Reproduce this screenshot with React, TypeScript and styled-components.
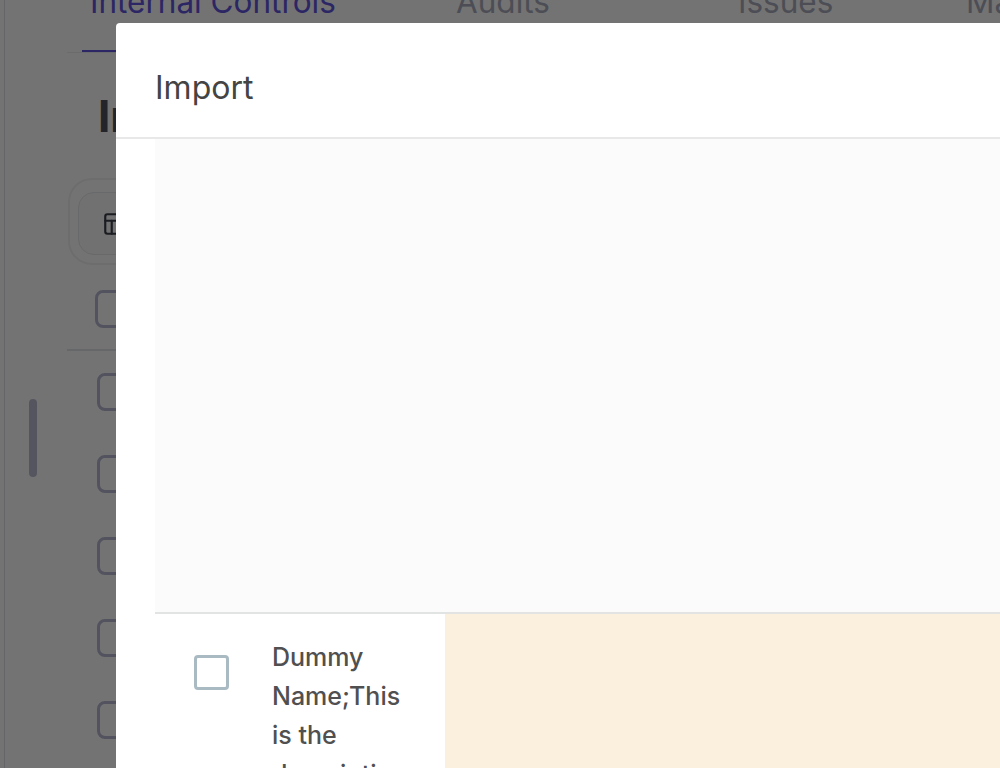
import React from "react";
import styled, { createGlobalStyle } from "styled-components";
import { PanelsTopLeft } from "lucide-react";

const GlobalStyle = createGlobalStyle`
  html, body {
    margin: 0;
    height: 100%;
    overflow: hidden;
    background: #fff;
    font-family: Inter, "Liberation Sans", sans-serif;
  }
  * { box-sizing: border-box; }
`;

const Page = styled.div`
  display: flex;
  height: 768px;
  overflow: hidden;
  padding-left: 4px;
`;

const Rail = styled.div`
  width: 63px;
  flex-shrink: 0;
  border-left: 1px solid #dfe1e6;
  padding: 399px 0 0 24px;
`;

const ScrollThumb = styled.div`
  width: 8px;
  height: 78px;
  border-radius: 4px;
  background: #bbbdd3;
`;

const Main = styled.div`
  flex: 1;
  min-width: 0;
`;

const Tabs = styled.div`
  display: flex;
  height: 67px;
  margin: -14px 0 0;
  padding: 0 0 0 15px;
  border-bottom: 1px solid #eceef1;
  white-space: nowrap;
  overflow: hidden;
`;

const Tab = styled.div<{ $width: number; $active?: boolean }>`
  width: ${({ $width }) => $width}px;
  flex-shrink: 0;
  height: 66px;
  padding: 0 8px;
  font-size: 31.5px;
  line-height: 32px;
  color: ${({ $active }) => ($active ? "#6255e0" : "#a9acbd")};
  box-shadow: ${({ $active }) => ($active ? "inset 0 -2px 0 #6255e0" : "none")};
`;

const Heading = styled.h1`
  margin: 39px 0 0 31px;
  font-size: 44px;
  line-height: 48px;
  font-weight: 700;
  color: #4e525f;
  white-space: nowrap;
`;

const ButtonRing = styled.div`
  display: flex;
  width: fit-content;
  margin: 38px 0 0 1px;
  padding: 12px 8px 8px;
  border: 2px solid #f1f2f4;
  border-radius: 24px;
`;

const ViewButton = styled.div`
  display: flex;
  align-items: center;
  width: 240px;
  height: 63px;
  padding-left: 23px;
  border: 1px solid #e6e8eb;
  border-radius: 16px;
  background: #fbfbfc;
  color: #3b3f4a;
`;

const HeaderRow = styled.div`
  height: 86px;
  padding: 25px 0 0 28px;
  border-bottom: 2px solid #e3e5e9;
`;

const BodyRow = styled.div`
  height: 82px;
  padding: 22px 0 0 30px;
`;

const TableBox = styled.div`
  width: 38px;
  height: 38px;
  border: 3px solid #b6b9d0;
  border-radius: 8px;
`;

const Backdrop = styled.div`
  position: fixed;
  inset: 0;
  padding: 23px 0 0 116px;
  overflow: hidden;
  background: rgba(0, 0, 0, 0.55);
`;

const Modal = styled.div`
  width: 1000px;
  height: 1000px;
  background: #fff;
  border-radius: 4px 0 0 0;
`;

const ModalHeader = styled.div`
  display: flex;
  align-items: center;
  height: 116px;
  padding: 14px 39px 0;
  border-bottom: 2px solid #e8e8e8;
  font-size: 32px;
  font-weight: 400;
  color: #444;
`;

const ModalBody = styled.div`
  padding-left: 39px;
`;

const PreviewArea = styled.div`
  height: 475px;
  background: #fbfbfb;
  border-bottom: 2px solid #e2e4e4;
`;

const ImportRow = styled.div`
  display: flex;
  height: 400px;
`;

const RowCheckCell = styled.div`
  width: 117px;
  flex-shrink: 0;
  padding: 41px 0 0 39px;
`;

const RowCheckbox = styled.div`
  width: 35px;
  height: 35px;
  border: 3px solid #a9bac3;
  border-radius: 4px;
  background: #fff;
`;

const RowText = styled.div`
  width: 173px;
  flex-shrink: 0;
  padding: 24px 30px 0 0;
  font-size: 25px;
  line-height: 39px;
  font-weight: 500;
  color: #505050;
  overflow-wrap: anywhere;
`;

const ErrorCell = styled.div`
  flex: 1;
  background: #fbf0de;
`;

export default function App() {
  return (
    <>
      <GlobalStyle />
      <Page>
        <Rail>
          <ScrollThumb />
        </Rail>
        <Main>
          <Tabs>
            <Tab $width={366} $active>Internal Controls</Tab>
            <Tab $width={282}>Audits</Tab>
            <Tab $width={228}>Issues</Tab>
            <Tab $width={200}>Management</Tab>
          </Tabs>
          <Heading>Internal Controls</Heading>
          <ButtonRing>
            <ViewButton>
              <PanelsTopLeft size={26} strokeWidth={2} />
            </ViewButton>
          </ButtonRing>
          <HeaderRow>
            <TableBox />
          </HeaderRow>
          <BodyRow><TableBox /></BodyRow>
          <BodyRow><TableBox /></BodyRow>
          <BodyRow><TableBox /></BodyRow>
          <BodyRow><TableBox /></BodyRow>
          <BodyRow><TableBox /></BodyRow>
        </Main>
      </Page>
      <Backdrop>
        <Modal>
          <ModalHeader>Import</ModalHeader>
          <ModalBody>
            <PreviewArea />
            <ImportRow>
              <RowCheckCell>
                <RowCheckbox />
              </RowCheckCell>
              <RowText>Dummy Name;This is the description</RowText>
              <ErrorCell />
            </ImportRow>
          </ModalBody>
        </Modal>
      </Backdrop>
    </>
  );
}
